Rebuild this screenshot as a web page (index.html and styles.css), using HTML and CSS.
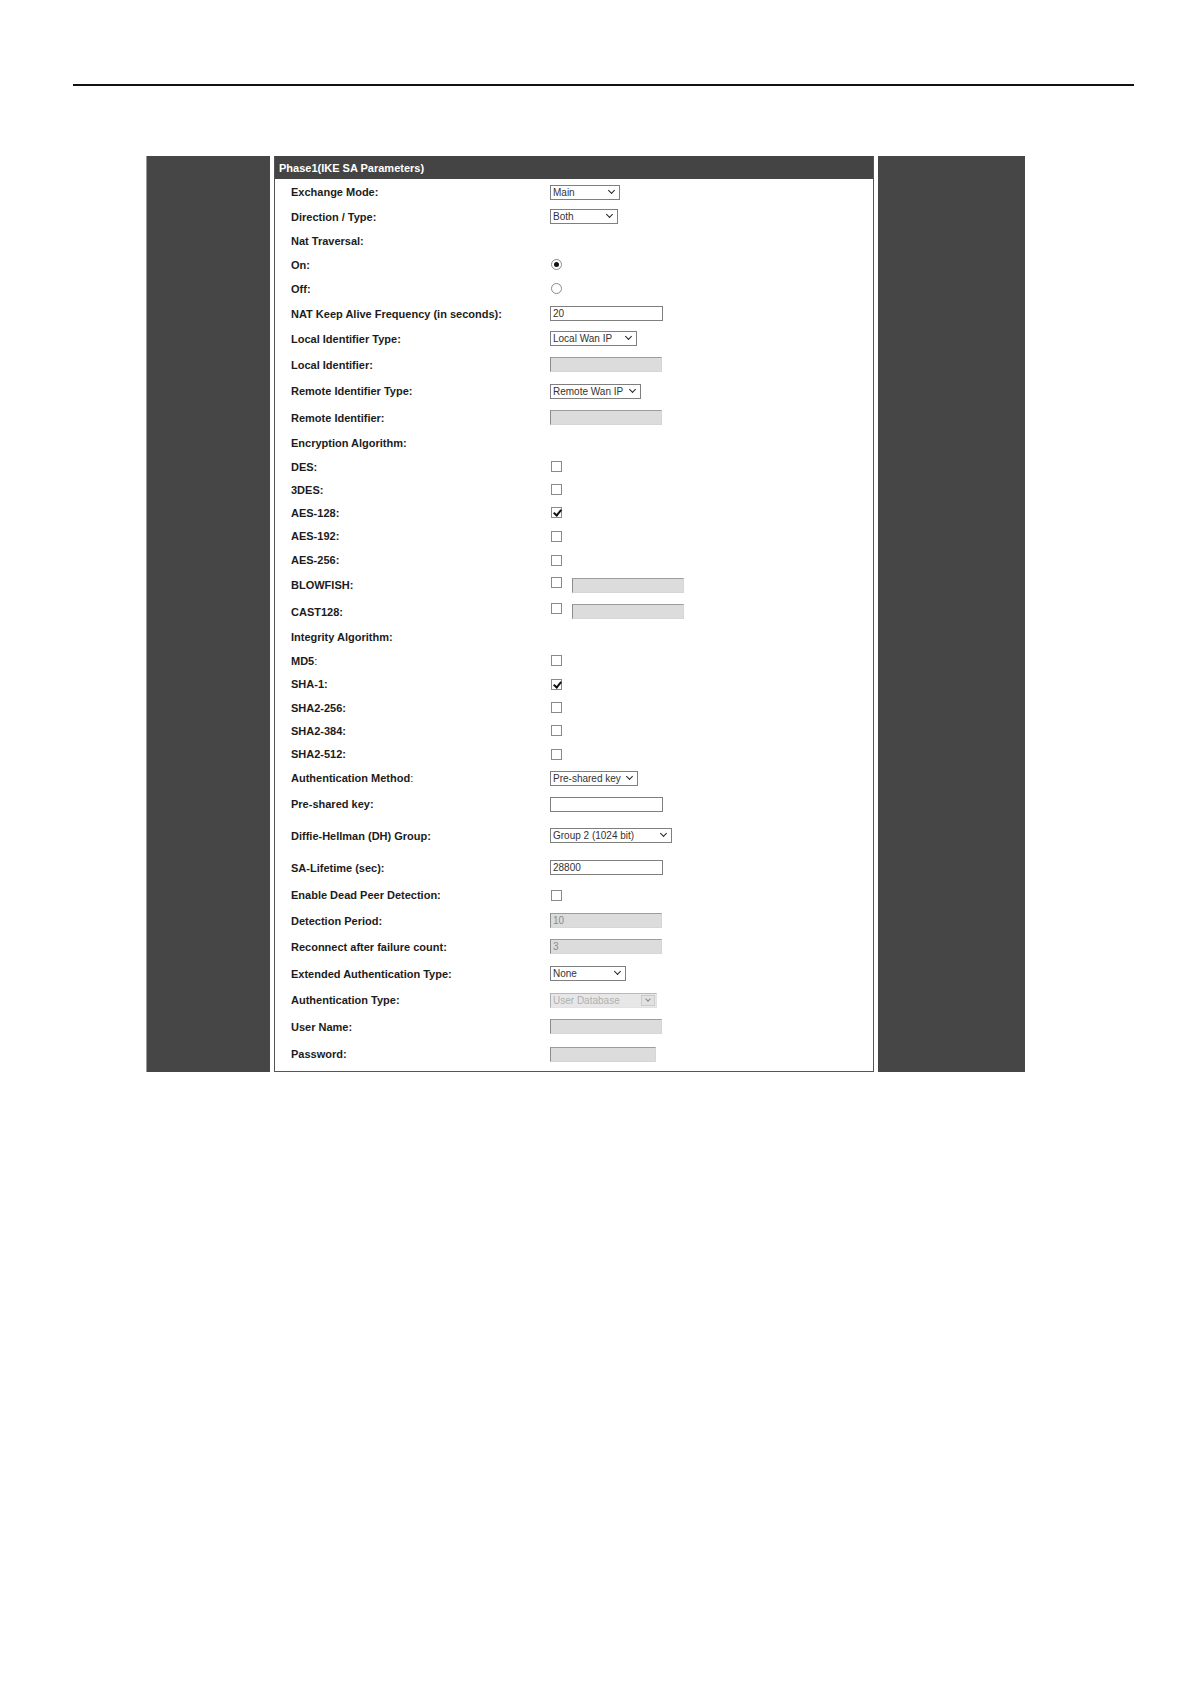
FILE: index.html
```html
<!DOCTYPE html>
<html lang="en">

<head>
    <meta charset="UTF-8">
    <title>Phase1 (IKE SA Parameters)</title>
    <link rel="stylesheet" href="styles.css">
</head>

<body>
    <div class="rule"></div>

    <div class="frame">
        <div class="side side-left"></div>

        <div class="panel">
            <div class="panel-head">Phase1(IKE SA Parameters)</div>
            <div class="form">
                <div class="row h24">
                    <label>Exchange Mode:</label>
                    <span class="select w70"><select><option>Main</option></select></span>
                </div>
                <div class="row h25">
                    <label>Direction / Type:</label>
                    <span class="select w68"><select><option>Both</option></select></span>
                </div>
                <div class="row h24"><label>Nat Traversal:</label></div>
                <div class="row h23">
                    <label>On:</label>
                    <input type="radio" name="nat" checked>
                </div>
                <div class="row h25">
                    <label>Off:</label>
                    <input type="radio" name="nat">
                </div>
                <div class="row h25">
                    <label>NAT Keep Alive Frequency (in seconds):</label>
                    <input type="text" class="w113" value="20">
                </div>
                <div class="row h25">
                    <label>Local Identifier Type:</label>
                    <span class="select w87"><select><option>Local Wan IP</option></select></span>
                </div>
                <div class="row h27">
                    <label>Local Identifier:</label>
                    <input type="text" class="w112" disabled>
                </div>
                <div class="row h26">
                    <label>Remote Identifier Type:</label>
                    <span class="select w91"><select><option>Remote Wan IP</option></select></span>
                </div>
                <div class="row h27">
                    <label>Remote Identifier:</label>
                    <input type="text" class="w112" disabled>
                </div>
                <div class="row h24"><label>Encryption Algorithm:</label></div>
                <div class="row h23"><label>DES:</label><input type="checkbox"></div>
                <div class="row h23"><label>3DES:</label><input type="checkbox"></div>
                <div class="row h23"><label>AES-128:</label><input type="checkbox" checked></div>
                <div class="row h24"><label>AES-192:</label><input type="checkbox"></div>
                <div class="row h24"><label>AES-256:</label><input type="checkbox"></div>
                <div class="row h26">
                    <label>BLOWFISH:</label>
                    <input type="checkbox" class="raised">
                    <input type="text" class="w112 key" disabled>
                </div>
                <div class="row h27">
                    <label>CAST128:</label>
                    <input type="checkbox" class="raised">
                    <input type="text" class="w112 key" disabled>
                </div>
                <div class="row h24"><label>Integrity Algorithm:</label></div>
                <div class="row h23"><label>MD5<span class="thin">:</span></label><input type="checkbox"></div>
                <div class="row h24"><label>SHA-1:</label><input type="checkbox" checked></div>
                <div class="row h23"><label>SHA2-256:</label><input type="checkbox"></div>
                <div class="row h23"><label>SHA2-384:</label><input type="checkbox"></div>
                <div class="row h24"><label>SHA2-512:</label><input type="checkbox"></div>
                <div class="row h24">
                    <label>Authentication Method<span class="thin">:</span></label>
                    <span class="select w88"><select><option>Pre-shared key</option></select></span>
                </div>
                <div class="row h28">
                    <label>Pre-shared key:</label>
                    <input type="text" class="w113">
                </div>
                <div class="row h35">
                    <label>Diffie-Hellman (DH) Group:</label>
                    <span class="select w122"><select><option>Group 2 (1024 bit)</option></select></span>
                </div>
                <div class="row h29">
                    <label>SA-Lifetime (sec):</label>
                    <input type="text" class="w113" value="28800">
                </div>
                <div class="row h26">
                    <label>Enable Dead Peer Detection:</label>
                    <input type="checkbox">
                </div>
                <div class="row h25">
                    <label>Detection Period:</label>
                    <input type="text" class="w112" value="10" disabled>
                </div>
                <div class="row h27">
                    <label>Reconnect after failure count:</label>
                    <input type="text" class="w112" value="3" disabled>
                </div>
                <div class="row h27">
                    <label>Extended Authentication Type:</label>
                    <span class="select w76"><select><option>None</option></select></span>
                </div>
                <div class="row h26">
                    <label>Authentication Type:</label>
                    <span class="select select-off w107"><select disabled><option>User Database</option></select></span>
                </div>
                <div class="row h27">
                    <label>User Name:</label>
                    <input type="text" class="w112" disabled>
                </div>
                <div class="row h28">
                    <label>Password:</label>
                    <input type="password" class="w106" disabled>
                </div>
            </div>
        </div>

        <div class="side side-right"></div>
    </div>
</body>

</html>
```

FILE: styles.css
```css
/* Page */
body {
    margin: 0;
    padding: 0;
    background-color: #fff;
    font-family: "Liberation Sans", Arial, sans-serif;
}

.rule {
    width: 1061px;
    height: 2px;
    margin: 84px 0 0 73px;
    background-color: #111;
}

.frame {
    display: flex;
    gap: 4px;
    margin: 70px 0 0 146px;
    height: 916px;
}

.side {
    background-color: #464646;
}

.side-left {
    width: 124px;
    border-left: 1px solid #9a9a9a;
    box-sizing: border-box;
}

.side-right {
    width: 147px;
}

/* Form panel */
.panel {
    width: 600px;
    box-sizing: border-box;
    border: 1px solid #555;
    border-top: none;
    background-color: #fff;
    display: flex;
    flex-direction: column;
}

.panel-head {
    height: 23px;
    line-height: 24px;
    padding-left: 4px;
    background-color: #444;
    color: #fff;
    font-size: 11px;
    font-weight: bold;
}

.form {
    padding: 1px 0 0 16px;
}

.row {
    display: flex;
    align-items: center;
}

.row label {
    width: 259px;
    flex-shrink: 0;
    font-size: 11px;
    font-weight: bold;
    color: #1c1c1c;
}

.thin {
    font-weight: normal;
}

.h23 { height: 23px; }
.h24 { height: 24px; }
.h25 { height: 25px; }
.h26 { height: 26px; }
.h27 { height: 27px; }
.h28 { height: 28px; }
.h29 { height: 29px; }
.h35 { height: 35px; }

/* Controls */
input[type="text"],
input[type="password"] {
    height: 15px;
    padding: 0 2px;
    margin: 0;
    border: 1px solid #7f7f7f;
    box-sizing: border-box;
    font-family: "Liberation Sans", Arial, sans-serif;
    font-size: 10px;
    color: #333;
    background-color: #fff;
}

input[type="text"]:disabled,
input[type="password"]:disabled {
    background-color: #dcdcdc;
    border-color: #9c9c9c #d6d6d6 #d6d6d6 #8c8c8c;
    color: #8a8a8a;
}

input.key {
    margin-left: 10px;
}

.w68 { width: 68px; }
.w70 { width: 70px; }
.w76 { width: 76px; }
.w87 { width: 87px; }
.w88 { width: 88px; }
.w91 { width: 91px; }
.w106 { width: 106px; }
.w107 { width: 107px; }
.w112 { width: 112px; }
.w113 { width: 113px; }
.w122 { width: 122px; }

.select {
    position: relative;
    display: block;
    height: 15px;
}

.select select {
    appearance: none;
    -webkit-appearance: none;
    display: block;
    width: 100%;
    height: 15px;
    margin: 0;
    padding: 0 0 0 2px;
    border: 1px solid #7f7f7f;
    border-radius: 0;
    background-color: #fff;
    font-family: "Liberation Sans", Arial, sans-serif;
    font-size: 10px;
    color: #333;
    line-height: 13px;
}

/* chevron drawn over the right end of the select */
.select::after {
    content: "";
    position: absolute;
    right: 6px;
    top: 3px;
    width: 4px;
    height: 4px;
    border-right: 1.5px solid #222;
    border-bottom: 1.5px solid #222;
    transform: rotate(45deg);
}

.select-off select {
    background-color: #dedede;
    border-color: #9c9c9c #d6d6d6 #d6d6d6 #8c8c8c;
    color: #8e8e8e;
}

.select-off::before {
    content: "";
    position: absolute;
    right: 2px;
    top: 2px;
    width: 12px;
    height: 9px;
    border: 1px solid #a0a0a0;
    background-color: #ececec;
}

.select-off::after {
    right: 7px;
    top: 4px;
    width: 3px;
    height: 3px;
    border-right: 1px solid #888;
    border-bottom: 1px solid #888;
}

input[type="checkbox"],
input[type="radio"] {
    appearance: none;
    -webkit-appearance: none;
    position: relative;
    width: 11px;
    height: 11px;
    margin: 0 0 0 1px;
    border: 1px solid #8a8a8a;
    background-color: #fff;
}

input[type="checkbox"].raised {
    align-self: flex-start;
    margin-top: 5px;
}

input[type="checkbox"]:checked::after {
    content: "";
    position: absolute;
    left: 3px;
    top: 0;
    width: 3px;
    height: 6px;
    border-right: 2px solid #111;
    border-bottom: 2px solid #111;
    transform: rotate(40deg);
}

input[type="radio"] {
    border-radius: 50%;
    border-color: #8a8a8a;
}

input[type="radio"]:checked::after {
    content: "";
    position: absolute;
    left: 2px;
    top: 2px;
    width: 5px;
    height: 5px;
    border-radius: 50%;
    background-color: #111;
}
```
